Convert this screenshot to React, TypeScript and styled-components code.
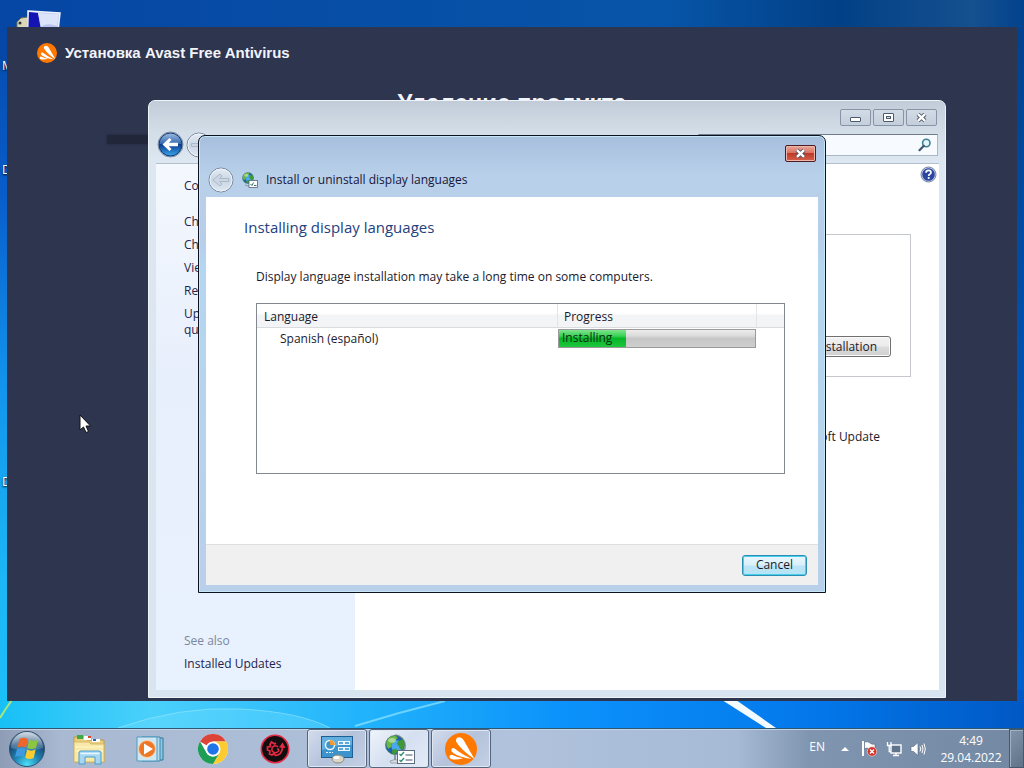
import React from "react";
import styled, { createGlobalStyle } from "styled-components";

const uiFont = `"Open Sans", "Noto Sans", sans-serif`;

const GlobalStyle = createGlobalStyle`
  * { box-sizing: border-box; }
  body { margin: 0; font-family: ${uiFont}; font-size: 12px; line-height: 16px; color: #1a1a2c; }
  button, input { font: inherit; color: inherit; }
  svg { display: block; flex: none; }
`;

/* ---------- desktop ---------- */

const Desktop = styled.div`
  position: relative;
  display: flex;
  flex-direction: column;
  height: 100vh;
  min-height: 640px;
  overflow: hidden;
  background: linear-gradient(180deg, #0648a6 0%, #085cca 25%, #1294ec 50%, #1cb6f4 75%, #1fc0fb 100%);
`;

const Wallpaper = styled.svg`
  position: absolute;
  inset: 0;
  width: 100%;
  height: 100%;
`;

const Workspace = styled.main`
  position: relative;
  flex: 1;
`;

const Shortcut = styled.div<{ $top: number }>`
  position: absolute;
  left: 2px;
  top: ${(p) => p.$top}px;
  width: 74px;
  display: flex;
  flex-direction: column;
  gap: 4px;
  color: #fff;
  white-space: nowrap;
  text-shadow: 0 1px 2px #000;
  svg { margin-left: 14px; }
`;

const Pointer = styled.svg`
  position: absolute;
  left: 79px;
  top: 414px;
`;

/* ---------- installer window ---------- */

const Installer = styled.section`
  position: absolute;
  inset: 27px 7px;
  bottom: 27px;
  background: #2e354f;
  color: #f2f4fa;
  font-family: "Liberation Sans", Arial, sans-serif;
`;

const InstallerBar = styled.header`
  display: flex;
  align-items: center;
  gap: 8px;
  padding: 16px 30px;
  font-size: 15px;
  line-height: 20px;
  font-weight: bold;
`;

const InstallerHeading = styled.h1`
  margin: 8px 0 0;
  font-size: 24px;
  line-height: 32px;
  text-align: center;
`;

const InstallerTrack = styled.div`
  height: 9px;
  margin: 16px 100px;
  background: #212638;
  box-shadow: 0 0 3px #212638;
`;

/* ---------- explorer window ---------- */

const Explorer = styled.section`
  position: absolute;
  inset: 100px 78px 30px 148px;
  display: flex;
  flex-direction: column;
  padding: 0 6px 7px 7px;
  border: 1px solid #eef3f8;
  border-radius: 7px 7px 0 0;
  background: linear-gradient(180deg, #c2ccd9 0, #d3dde8 30px, #dde7f1 60px, #d8e4ef 100%);
`;

const CaptionBar = styled.div`
  display: flex;
  justify-content: flex-end;
  gap: 2px;
  padding: 8px 2px 0;
`;

const CaptionButton = styled.button`
  display: grid;
  place-items: center;
  width: 31px;
  height: 17px;
  padding: 0;
  border: 1px solid #8794a8;
  border-radius: 2px;
  background: linear-gradient(180deg, #d2dbe6, #c4cfdc);
`;

const CloseButton = styled(CaptionButton)`
  border-color: #4b1c22;
  background: linear-gradient(180deg, #e8a79b 0, #d97463 45%, #bd3a26 50%, #d5614c 100%);
  box-shadow: inset 0 0 0 1px #f0b5aa;
`;

const NavRow = styled.div`
  display: flex;
  align-items: center;
  justify-content: space-between;
  height: 38px;
  padding: 0 1px;
  border-bottom: 1px solid #b3bfcd;
`;

const NavButtons = styled.div`
  display: flex;
  gap: 2px;
`;

const RoundButton = styled.button`
  padding: 0;
  border: 0;
  background: none;
`;

const SearchBox = styled.label`
  display: flex;
  align-items: center;
  width: 240px;
  height: 22px;
  padding: 0 5px;
  border: 1px solid #aab8c8;
  border-top-color: #6f7c8e;
  background: #f7fbff;
  input { flex: 1; min-width: 0; border: 0; background: none; outline: none; }
`;

const ExplorerBody = styled.div`
  flex: 1;
  display: flex;
  background: #fff;
`;

const Sidebar = styled.nav`
  display: flex;
  flex-direction: column;
  gap: 7px;
  width: 199px;
  padding: 14px 70px 18px 28px;
  background: linear-gradient(180deg, #f4f8fe 0, #e8effc 40%, #e8f2fe 100%);
`;

const SideLink = styled.a`
  color: #23234e;
  text-decoration: none;
`;

const HomeLink = styled(SideLink)`
  margin-bottom: 13px;
`;

const SeeAlso = styled.div`
  margin-top: auto;
  color: #7b889c;
`;

const ExplorerMain = styled.div`
  flex: 1;
  display: flex;
  flex-direction: column;
  align-items: flex-end;
  padding: 2px 2px 0 30px;
`;

const HelpButton = styled(RoundButton)`
  margin-bottom: 51px;
`;

const UpdateBox = styled.div`
  display: flex;
  align-items: flex-end;
  justify-content: flex-end;
  width: calc(100% - 26px);
  height: 143px;
  margin-right: 26px;
  padding: 19px;
  border: 1px solid #c4c8cc;
`;

const PushButton = styled.button<{ $default?: boolean }>`
  height: 21px;
  padding: 0 13px;
  border: 1px solid ${(p) => (p.$default ? "#2a8fb0" : "#707070")};
  border-radius: 3px;
  background: ${(p) =>
    p.$default
      ? "linear-gradient(180deg, #eaf7fd 0, #d9effa 48%, #bde4f6 52%, #b4e4f5 100%)"
      : "linear-gradient(180deg, #f2f2f2 0, #ebebeb 48%, #dddddd 52%, #cfcfcf 100%)"};
  box-shadow: inset 0 0 0 1px ${(p) => (p.$default ? "#48cdec" : "#fbfbfb")};
  line-height: 18px;
`;

const UpdateNote = styled.p`
  margin: 52px 57px 0 0;
`;

/* ---------- language dialog ---------- */

const Dialog = styled.section`
  position: absolute;
  inset: 135px 198px;
  display: flex;
  flex-direction: column;
  padding: 0 7px 7px;
  border: 1px solid #0c1220;
  border-radius: 7px 7px 0 0;
  background: linear-gradient(180deg, #a6bfdd 0, #b9d0ea 40px, #b7cdea 100px, #b4d6f0 130px, #b9d0ea 100%);
  box-shadow: inset 0 0 0 1px #c5e6f7;
`;

const DialogCaption = styled.div`
  display: flex;
  justify-content: flex-end;
  padding: 9px 2px 0;
`;

const DialogTitle = styled.header`
  display: flex;
  align-items: center;
  gap: 8px;
  height: 35px;
  padding: 0 2px;
  color: #16163a;
`;

const DialogPage = styled.div`
  flex: 1;
  display: flex;
  flex-direction: column;
  padding: 18px 33px 0 38px;
  background: #fff;
`;

const PageHeading = styled.h2`
  margin: 0;
  font-size: 15px;
  line-height: 24px;
  font-weight: normal;
  color: #23427e;
`;

const PageText = styled.p`
  margin: 30px 12px 18px;
`;

const ListBox = styled.div`
  height: 171px;
  margin-left: 12px;
  border: 1px solid #828790;
`;

const LanguageTable = styled.table`
  width: 100%;
  border-collapse: separate;
  border-spacing: 0;
  table-layout: fixed;
  th, td { padding: 0; text-align: left; font-weight: normal; }
  th {
    height: 24px;
    padding-left: 7px;
    padding-top: 2px;
    border-bottom: 1px solid #d9dbde;
    background: linear-gradient(180deg, #fff 0, #fff 40%, #f3f4f5 50%, #f3f4f5 100%);
  }
  th + th { padding-left: 6px; border-left: 1px solid #e2e4e6; }
  th:first-child { width: 300px; }
  th:last-child { width: 28px; }
  td { height: 21px; }
  td:first-child { padding-left: 23px; }
`;

const Meter = styled.div`
  position: relative;
  height: 19px;
  margin-left: 1px;
  border: 1px solid #9a9a9a;
  background: linear-gradient(180deg, #ededed 0, #dadada 35%, #c6c6c6 50%, #cfcfcf 100%);
`;

const MeterFill = styled.div`
  height: 100%;
  background: linear-gradient(180deg, #7fe48e 0, #3ad255 35%, #06b628 50%, #1fc63e 100%);
`;

const MeterLabel = styled.span`
  position: absolute;
  left: 3px;
  top: 0;
  color: #0c2a12;
`;

const DialogFooter = styled.footer`
  display: flex;
  align-items: center;
  justify-content: flex-end;
  height: 41px;
  padding: 0 11px;
  border-top: 1px solid #dfdfdf;
  background: #f0f0f0;
`;

/* ---------- taskbar ---------- */

const Taskbar = styled.footer`
  position: relative;
  display: flex;
  align-items: stretch;
  height: 40px;
  border-top: 1px solid #2d5873;
  background: linear-gradient(90deg, #8e9db5 0, #a9b9d2 6%, #b0c2dc 50%, #a6bad6 72%, #8095b0 79%, #7388a2 100%);
  box-shadow: inset 0 1px 0 #c3d3e6;
`;

const StartButton = styled.button`
  width: 54px;
  padding: 1px 8px 0;
  border: 0;
  background: none;
`;

const TaskButtons = styled.div`
  display: flex;
  gap: 2px;
  padding-left: 5px;
`;

const TaskButton = styled.button<{ $open?: boolean; $active?: boolean }>`
  display: grid;
  place-items: center;
  width: 60px;
  height: 39px;
  padding: 0;
  border: 1px solid ${(p) => (p.$open ? "#56657c" : "transparent")};
  border-radius: 3px;
  background: ${(p) =>
    p.$active
      ? "linear-gradient(135deg, #f0f4fb, #d4dff0 50%, #e4ebf7)"
      : p.$open
        ? "linear-gradient(135deg, #d3dcec, #b4c2db 50%, #c3d0e4)"
        : "none"};
  box-shadow: ${(p) => (p.$open ? "inset 0 0 0 1px #dfe7f2" : "none")};
`;

const Tray = styled.div`
  display: flex;
  align-items: center;
  gap: 8px;
  margin-left: auto;
  color: #fff;
`;

const TrayLanguage = styled.span`
  margin-right: 8px;
  margin-bottom: 4px;
`;

const TrayArrow = styled.button`
  width: 12px;
  padding: 0;
  border: 0;
  background: none;
`;

const Clock = styled.time`
  display: flex;
  flex-direction: column;
  align-items: center;
  width: 74px;
  line-height: 17px;
`;

const ShowDesktop = styled.button`
  align-self: stretch;
  width: 15px;
  margin-left: -7px;
  border: 1px solid #46586e;
  background: linear-gradient(135deg, #8294aa, #5f7288);
  box-shadow: inset 1px 1px 0 #9fb0c3;
`;

/* ---------- drawings ---------- */

const AvastLogo = ({ size }: { size: number }) => (
  <svg width={size} height={size} viewBox="0 0 32 32" aria-hidden="true">
    <circle cx="16" cy="16" r="16" fill="#ff7800" />
    <g fill="#fff">
      <path d="M11 8.500Q10.500 4.500 14.300 4.300Q17 4.300 18.700 7.300L29.500 26Q16.500 17.500 11 8.500Z" />
      <path d="M6.300 16.800Q7 14.200 9.700 15.600Q16 21 26.500 25.800Q14 24.500 8 19.800Q6 18.500 6.300 16.800Z" />
      <path d="M4.500 23.300Q5 21.200 7.500 21.900Q12 24 18 25.300Q11 27.300 6.200 26Q4.200 25.200 4.500 23.300Z" />
    </g>
  </svg>
);

const BackArrow = () => (
  <svg width="27" height="27" viewBox="0 0 27 27" aria-hidden="true">
    <defs>
      <linearGradient id="backFill" x2="0" y2="1">
        <stop offset="0" stopColor="#9cbce0" />
        <stop offset=".48" stopColor="#3467ae" />
        <stop offset=".5" stopColor="#0c3c8c" />
        <stop offset="1" stopColor="#39a8ee" />
      </linearGradient>
    </defs>
    <circle cx="13.500" cy="13.500" r="12.500" fill="#d8e4f0" stroke="#7d8fa6" />
    <circle cx="13.500" cy="13.500" r="11.500" fill="url(#backFill)" stroke="#16356f" />
    <path d="M5.500 13.500L12.500 7L14.500 9L11.800 11.800H21V15.200H11.800L14.500 18L12.500 20Z" fill="#fff" />
  </svg>
);

const DisabledArrow = ({ flip }: { flip?: boolean }) => (
  <svg width="26" height="26" viewBox="0 0 26 26" aria-hidden="true">
    <defs>
      <linearGradient id="offFill" x2="0" y2="1">
        <stop offset="0" stopColor="#e6eef6" />
        <stop offset=".5" stopColor="#c8d5e3" />
        <stop offset="1" stopColor="#dfe9f2" />
      </linearGradient>
    </defs>
    <circle cx="13" cy="13" r="12" fill="url(#offFill)" stroke="#78889c" />
    <circle cx="13" cy="13" r="11" fill="none" stroke="#eef4fa" />
    <path
      d="M5 13L12 7L14 9L11.500 11.500H20.500V14.500H11.500L14 17L12 19Z"
      fill="#ccd7e3"
      stroke="#abb9c9"
      transform={flip ? "matrix(-1 0 0 1 26 0)" : undefined}
    />
  </svg>
);

const Globe = ({ x, y, r }: { x: number; y: number; r: number }) => (
  <g transform={`translate(${x} ${y}) scale(${r / 10})`}>
    <circle r="10" fill="#1d5fb4" stroke="#4a7a4f" strokeWidth=".8" />
    <circle cx="2" cy="1" r="6" fill="#4aa8ee" />
    <path d="M-9 -4C-7 -8 -3 -10 1 -9.500L3 -7L0 -5L-1 -2L-4 -1L-4 2L-7 4L-9 1Z" fill="#69b83f" />
    <path d="M3 -4L8 -6L10 0L8 5L5 4L4 1L2 -1Z M-3 5L1 4L3 7L0 9.500L-3 9Z" fill="#3f9a35" />
    <ellipse cx="-3" cy="-5" rx="4" ry="2.500" fill="#fff" opacity=".45" />
  </g>
);

const LanguageIcon = () => (
  <svg width="16" height="16" viewBox="0 0 16 16" aria-hidden="true">
    <Globe x={6} y={6} r={5.5} />
    <path d="M3 13Q6 15 9 13" stroke="#8b98a8" fill="none" />
    <rect x="7" y="8.500" width="8.500" height="7" fill="#fff" stroke="#55677c" strokeWidth=".8" />
    <path d="M8.500 12L10 13.500L11.500 10.500" stroke="#2d7c5a" fill="none" />
    <path d="M12 13.500H14.500" stroke="#55677c" />
  </svg>
);

const SearchIcon = () => (
  <svg width="14" height="14" viewBox="0 0 14 14" aria-hidden="true">
    <circle cx="8.300" cy="5" r="3.700" fill="#e4f4f8" stroke="#3d7f94" strokeWidth="1.600" />
    <path d="M5.800 7.800L1.500 12.200" stroke="#41566e" strokeWidth="2.200" strokeLinecap="round" />
  </svg>
);

const HelpIcon = () => (
  <svg width="17" height="17" viewBox="0 0 17 17" aria-hidden="true">
    <circle cx="8.500" cy="8.500" r="7.500" fill="#c5d0e6" stroke="#7484a8" />
    <circle cx="8.500" cy="8.500" r="6.300" fill="#2c46a0" />
    <path d="M6 6.800Q6 4.300 8.500 4.300Q11 4.300 11 6.400Q11 7.700 9.700 8.300Q8.700 8.800 8.700 10" stroke="#fff" strokeWidth="1.700" fill="none" />
    <circle cx="8.700" cy="12" r="1.100" fill="#fff" />
  </svg>
);

const MinimizeGlyph = () => (
  <svg width="12" height="11" viewBox="0 0 12 11" aria-hidden="true">
    <rect x=".5" y="5.500" width="10" height="4" rx=".5" fill="#fff" stroke="#4c5a70" />
  </svg>
);

const MaximizeGlyph = () => (
  <svg width="11" height="11" viewBox="0 0 11 11" aria-hidden="true">
    <rect x=".5" y="1.500" width="10" height="8" rx=".5" fill="#fff" stroke="#4c5a70" />
    <rect x="3.500" y="4.500" width="4" height="2" fill="#d5dee9" stroke="#4c5a70" />
  </svg>
);

const CloseGlyph = () => (
  <svg width="13" height="11" viewBox="0 0 13 11" aria-hidden="true">
    <path d="M3 2.200L10 8.800M10 2.200L3 8.800" stroke="#4b5263" strokeWidth="4.200" />
    <path d="M3 2.200L10 8.800M10 2.200L3 8.800" stroke="#fff" strokeWidth="2.400" />
  </svg>
);

const ComputerIcon = () => (
  <svg width="46" height="44" viewBox="0 0 46 44" aria-hidden="true">
    <path d="M1 12L5 8L12 7V40L1 36Z" fill="#d8d8b8" stroke="#6e7358" />
    <circle cx="4" cy="13" r="1.500" fill="#333" />
    <path d="M12 1L44 3L41 30L12 34Z" fill="#b8c4ec" stroke="#eef3ff" strokeWidth="1.500" />
    <path d="M13 2L22 3L27 32L12 33Z" fill="#1414b4" />
    <path d="M22 3L43 4L41 16Q30 12 25 17Z" fill="#dbe4f8" />
  </svg>
);

const StartOrb = () => (
  <svg width="38" height="38" viewBox="0 0 38 38" aria-hidden="true">
    <defs>
      <radialGradient id="orb" cx=".5" cy=".95" r=".9">
        <stop offset="0" stopColor="#4fe0f8" />
        <stop offset=".4" stopColor="#1f84b4" />
        <stop offset=".75" stopColor="#174a78" />
        <stop offset="1" stopColor="#5c7f9f" />
      </radialGradient>
      <linearGradient id="orbShine" x2="0" y2="1">
        <stop offset="0" stopColor="#fff" stopOpacity=".7" />
        <stop offset="1" stopColor="#fff" stopOpacity=".1" />
      </linearGradient>
    </defs>
    <circle cx="19" cy="19" r="17.500" fill="url(#orb)" stroke="#33536f" />
    <path d="M3 18A16 16 0 0 1 35 18Q19 24 3 18Z" fill="url(#orbShine)" />
    <path d="M11.500 9Q15.500 6.500 20 9L18 17.500Q14 15.500 9.500 17.500Z" fill="#f0652a" />
    <path d="M21.200 9.600Q25.500 12 30 9.600L28 18Q23.500 20.200 19.200 18Z" fill="#8cc63f" />
    <path d="M9 19Q13.500 17 17.700 19L16 27Q11.500 25 7 27Z" fill="#3f9ae0" />
    <path d="M19 19.600Q23 21.700 27.600 19.600L25.700 28Q21.500 30 17.200 27.700Z" fill="#fccb2e" />
  </svg>
);

const FolderIcon = () => (
  <svg width="34" height="32" viewBox="0 0 34 32" aria-hidden="true">
    <path d="M2 4H13L15 7H32V29H2Z" fill="#e9cf7c" stroke="#b99b4a" />
    <path d="M5 2H11V6H5Z" fill="#3daa45" /><path d="M12 3H19V7H12Z" fill="#fff" /><path d="M16 3H19V5H16Z" fill="#d04a2c" />
    <path d="M20 6H28V9H20Z" fill="#fff" /><path d="M21 6H24V8H21Z" fill="#2b64b8" />
    <path d="M2 9H17L19 11H32V29H2Z" fill="#f8e9a8" stroke="#d5b866" />
    <path d="M3 14H31M3 18H31" stroke="#fff6cc" />
    <path d="M7 31V20Q7 18 9 18H27Q29 18 29 20V31H23V24H13V31Z" fill="#a5d7f2" stroke="#4a9bcc" />
    <path d="M8.500 20.500H27.500" stroke="#e7f6fe" strokeWidth="1.500" />
  </svg>
);

const MediaIcon = () => (
  <svg width="30" height="28" viewBox="0 0 30 28" aria-hidden="true">
    <path d="M8 3H27V25H8Z" fill="#8fc6e2" stroke="#2f789f" />
    <path d="M6 2H24V26H6Z" fill="#b4dbee" stroke="#3f88ae" />
    <path d="M1 2H21V26H1Z" fill="#cfe6f3" stroke="#4f9abf" />
    <circle cx="11" cy="14" r="8.500" fill="#ee7724" stroke="#fbd3ad" />
    <path d="M8 8.500L17 14L8 19.500Z" fill="#fff" />
  </svg>
);

const ChromeIcon = () => (
  <svg width="30" height="30" viewBox="0 0 30 30" aria-hidden="true">
    <circle cx="15" cy="15" r="15" fill="#fff" />
    <path d="M15 15L2 7.500A15 15 0 0 1 28 7.500H15Z" fill="#dc4437" />
    <path d="M15 7.500H28A15 15 0 0 1 15 30L21.500 18.750Z" fill="#fccb2f" />
    <path d="M2 7.500A15 15 0 0 0 15 30L21.500 18.750A7.500 7.500 0 0 1 8.500 18.750Z" fill="#1e9e55" />
    <circle cx="15" cy="15" r="7.500" fill="#fff" />
    <circle cx="15" cy="15" r="5.800" fill="#1f74e8" />
  </svg>
);

const GearSwirlIcon = () => (
  <svg width="30" height="30" viewBox="0 0 30 30" aria-hidden="true">
    <circle cx="15" cy="15" r="13.700" fill="#140d10" stroke="#e62a44" strokeWidth="1.600" />
    <path d="M16 9L14.500 10L11.500 8L10 10.500L10.500 12.500L7.500 13L7.500 16L10 17L9.500 20L12 21L14 19.500L15.500 21.500Q22 21 22.500 13" fill="none" stroke="#e62a44" strokeWidth="1.700" />
    <path d="M19 13.500L22.500 8.500L25.500 14Z" fill="#e62a44" />
    <path d="M18 13A3.500 3.500 0 1 0 18 17.500Q20 15 17 15" fill="none" stroke="#e62a44" strokeWidth="1.500" />
  </svg>
);

const ControlPanelIcon = () => (
  <svg width="34" height="30" viewBox="0 0 34 30" aria-hidden="true">
    <rect x="1.500" y="2.500" width="31" height="21" fill="#3d94cc" stroke="#1f5f95" />
    <path d="M2 3H32V11Q18 10 2 16Z" fill="#7cbfe6" opacity=".6" />
    <circle cx="10" cy="11" r="4.500" fill="#3d94cc" stroke="#eaf6fd" strokeWidth="1.500" />
    <path d="M10 11V6A5 5 0 0 1 15 11Z" fill="#f49a2c" />
    <g fill="#5aa9da" stroke="#eaf6fd">
      <rect x="18.500" y="7.500" width="5" height="3" /><rect x="24.500" y="7.500" width="5" height="3" />
      <rect x="18.500" y="13.500" width="5" height="3" /><rect x="24.500" y="13.500" width="5" height="3" />
    </g>
    <path d="M6 18.500H13" stroke="#eaf6fd" strokeDasharray="2 1" />
    <ellipse cx="18" cy="25" rx="6" ry="4" fill="#d9d5c7" stroke="#8d8979" />
    <ellipse cx="16.500" cy="23.500" rx="3" ry="1.500" fill="#fff" />
  </svg>
);

const LanguageTaskIcon = () => (
  <svg width="32" height="32" viewBox="0 0 32 32" aria-hidden="true">
    <path d="M12 2A11 11 0 0 1 21 18" fill="none" stroke="#8a98a8" strokeWidth="1.500" />
    <path d="M7 28Q12 25 17 28L16 30H8Z" fill="#d5dce4" stroke="#98a4b2" />
    <path d="M12 22V27" stroke="#8a98a8" strokeWidth="2" />
    <Globe x={12} y={12} r={9.5} />
    <rect x="14.500" y="17.500" width="17" height="13" fill="#fff" stroke="#5e6c80" />
    <path d="M16.500 21L18 22.500L21 19M16.500 27L18 28.500L21 25" stroke="#2f8b6d" strokeWidth="1.300" fill="none" />
    <path d="M22.500 22H29.500M22.500 27H29.500" stroke="#44536a" />
  </svg>
);

const FlagIcon = () => (
  <svg width="17" height="17" viewBox="0 0 17 17" aria-hidden="true">
    <path d="M2 1V16" stroke="#fff" strokeWidth="2" />
    <path d="M3.500 2Q7 1 9 3T14 4V10Q11 11 8.500 9T3.500 9Z" fill="#fff" stroke="#56657a" strokeWidth=".6" />
    <circle cx="11" cy="11.500" r="4.700" fill="#d3322a" stroke="#f3d0cc" strokeWidth=".7" />
    <path d="M9 9.500L13 13.500M13 9.500L9 13.500" stroke="#fff" strokeWidth="1.400" />
  </svg>
);

const NetworkIcon = () => (
  <svg width="16" height="16" viewBox="0 0 16 16" aria-hidden="true">
    <rect x="5" y="4" width="10" height="8" fill="#60748c" stroke="#fff" strokeWidth="1.400" />
    <path d="M7 14.500H13M10 12V14" stroke="#fff" strokeWidth="1.500" />
    <path d="M1.500 1V4.500H5V1M3.200 4.500V10.500H5" stroke="#fff" strokeWidth="1.300" fill="none" />
  </svg>
);

const SpeakerIcon = () => (
  <svg width="16" height="16" viewBox="0 0 16 16" aria-hidden="true">
    <path d="M1 5.500H3.500L8 1.500V14.500L3.500 10.500H1Z" fill="#fff" stroke="#56657a" strokeWidth=".6" />
    <path d="M10 5.500Q11.500 8 10 10.500M12 4Q14 8 12 12M14 2.500Q16.600 8 14 13.500" stroke="#fff" fill="none" />
  </svg>
);

const sideLinks = ["Check", "Change", "View log", "Restore", "Updates: questions"];

const languages = [{ name: "Spanish (español)", state: "Installing", percent: 34 }];

export default function App() {
  return (
    <>
      <GlobalStyle />
      <Desktop>
        <Wallpaper viewBox="0 0 1024 768" preserveAspectRatio="none" aria-hidden="true">
          <defs>
            <linearGradient id="skyTop">
              <stop offset="0" stopColor="#0646a4" />
              <stop offset=".65" stopColor="#0755a8" />
              <stop offset=".82" stopColor="#024086" />
              <stop offset=".95" stopColor="#15508f" />
              <stop offset="1" stopColor="#02428e" />
            </linearGradient>
            <linearGradient id="skyBottom">
              <stop offset="0" stopColor="#18c0f6" />
              <stop offset=".15" stopColor="#4bd0fb" />
              <stop offset=".35" stopColor="#22b4fb" />
              <stop offset=".55" stopColor="#0c92fb" />
              <stop offset=".8" stopColor="#0377ea" />
              <stop offset="1" stopColor="#0058c4" />
            </linearGradient>
            <linearGradient id="skyRight" x2="0" y2="1">
              <stop offset="0" stopColor="#02428e" />
              <stop offset="1" stopColor="#0060cc" />
            </linearGradient>
          </defs>
          <rect width="1024" height="60" fill="url(#skyTop)" />
          <rect x="960" y="27" width="64" height="680" fill="url(#skyRight)" />
          <rect y="690" width="1024" height="78" fill="url(#skyBottom)" />
          <path d="M118 728Q180 706 240 709T330 728Z" fill="#6fe0ff" opacity=".35" />
          <path d="M118 728Q180 706 240 709T330 728" stroke="#9beaff" fill="none" opacity=".6" />
          <path d="M355 726Q400 712 445 701" stroke="#8fe4ff" strokeWidth="2" fill="none" opacity=".7" />
          <path d="M0 718Q6 708 12 700" stroke="#a8e87a" strokeWidth="2" fill="none" />
          <path d="M722 700H736L776 728H766Z" fill="#f2fbff" />
        </Wallpaper>

        <Workspace>
          <Shortcut $top={10}>
            <ComputerIcon />
            My Computer
          </Shortcut>
          <Shortcut $top={162}>Documents</Shortcut>
          <Shortcut $top={474}>Downloads</Shortcut>

          <Installer>
            <InstallerBar>
              <AvastLogo size={20} />
              Установка Avast Free Antivirus
            </InstallerBar>
            <InstallerHeading>Удаление продукта</InstallerHeading>
            <InstallerTrack />
          </Installer>

          <Explorer>
            <CaptionBar>
              <CaptionButton aria-label="Minimize"><MinimizeGlyph /></CaptionButton>
              <CaptionButton aria-label="Maximize"><MaximizeGlyph /></CaptionButton>
              <CaptionButton aria-label="Close"><CloseGlyph /></CaptionButton>
            </CaptionBar>
            <NavRow>
              <NavButtons>
                <RoundButton aria-label="Back"><BackArrow /></RoundButton>
                <RoundButton aria-label="Forward"><DisabledArrow flip /></RoundButton>
              </NavButtons>
              <SearchBox>
                <input type="search" aria-label="Search Control Panel" />
                <SearchIcon />
              </SearchBox>
            </NavRow>
            <ExplorerBody>
              <Sidebar>
                <HomeLink href="#home">Control</HomeLink>
                {sideLinks.map((text) => (
                  <SideLink href="#task" key={text}>{text}</SideLink>
                ))}
                <SeeAlso>See also</SeeAlso>
                <SideLink href="#installed">Installed Updates</SideLink>
              </Sidebar>
              <ExplorerMain>
                <HelpButton aria-label="Help"><HelpIcon /></HelpButton>
                <UpdateBox>
                  <PushButton>Stop installation</PushButton>
                </UpdateBox>
                <UpdateNote>Microsoft Update</UpdateNote>
              </ExplorerMain>
            </ExplorerBody>
          </Explorer>

          <Dialog role="dialog" aria-label="Install or uninstall display languages">
            <DialogCaption>
              <CloseButton aria-label="Close"><CloseGlyph /></CloseButton>
            </DialogCaption>
            <DialogTitle>
              <RoundButton aria-label="Back"><DisabledArrow /></RoundButton>
              <LanguageIcon />
              Install or uninstall display languages
            </DialogTitle>
            <DialogPage>
              <PageHeading>Installing display languages</PageHeading>
              <PageText>Display language installation may take a long time on some computers.</PageText>
              <ListBox>
                <LanguageTable>
                  <thead>
                    <tr><th>Language</th><th>Progress</th><th aria-label="More" /></tr>
                  </thead>
                  <tbody>
                    {languages.map((l) => (
                      <tr key={l.name}>
                        <td>{l.name}</td>
                        <td>
                          <Meter role="progressbar" aria-valuenow={l.percent} aria-label={l.name}>
                            <MeterFill style={{ width: `${l.percent}%` }} />
                            <MeterLabel>{l.state}</MeterLabel>
                          </Meter>
                        </td>
                        <td />
                      </tr>
                    ))}
                  </tbody>
                </LanguageTable>
              </ListBox>
            </DialogPage>
            <DialogFooter>
              <PushButton $default>Cancel</PushButton>
            </DialogFooter>
          </Dialog>

          <Pointer width="13" height="20" viewBox="0 0 13 20" aria-hidden="true">
            <path d="M1 1V16L4.500 13L7 18.500L9.500 17.500L7 12H11.500Z" fill="#fff" stroke="#111" />
          </Pointer>
        </Workspace>

        <Taskbar>
          <StartButton aria-label="Start"><StartOrb /></StartButton>
          <TaskButtons>
            <TaskButton aria-label="Explorer"><FolderIcon /></TaskButton>
            <TaskButton aria-label="Media Player"><MediaIcon /></TaskButton>
            <TaskButton aria-label="Chrome"><ChromeIcon /></TaskButton>
            <TaskButton aria-label="Uninstaller"><GearSwirlIcon /></TaskButton>
            <TaskButton $open aria-label="Windows Update"><ControlPanelIcon /></TaskButton>
            <TaskButton $open $active aria-label="Display languages"><LanguageTaskIcon /></TaskButton>
            <TaskButton $open aria-label="Avast"><AvastLogo size={32} /></TaskButton>
          </TaskButtons>
          <Tray>
            <TrayLanguage>EN</TrayLanguage>
            <TrayArrow aria-label="Show hidden icons">
              <svg width="8" height="4" viewBox="0 0 8 4" aria-hidden="true"><path d="M0 4L4 0L8 4Z" fill="#fff" /></svg>
            </TrayArrow>
            <FlagIcon />
            <NetworkIcon />
            <SpeakerIcon />
            <Clock><span>4:49</span><span>29.04.2022</span></Clock>
            <ShowDesktop aria-label="Show desktop" />
          </Tray>
        </Taskbar>
      </Desktop>
    </>
  );
}
